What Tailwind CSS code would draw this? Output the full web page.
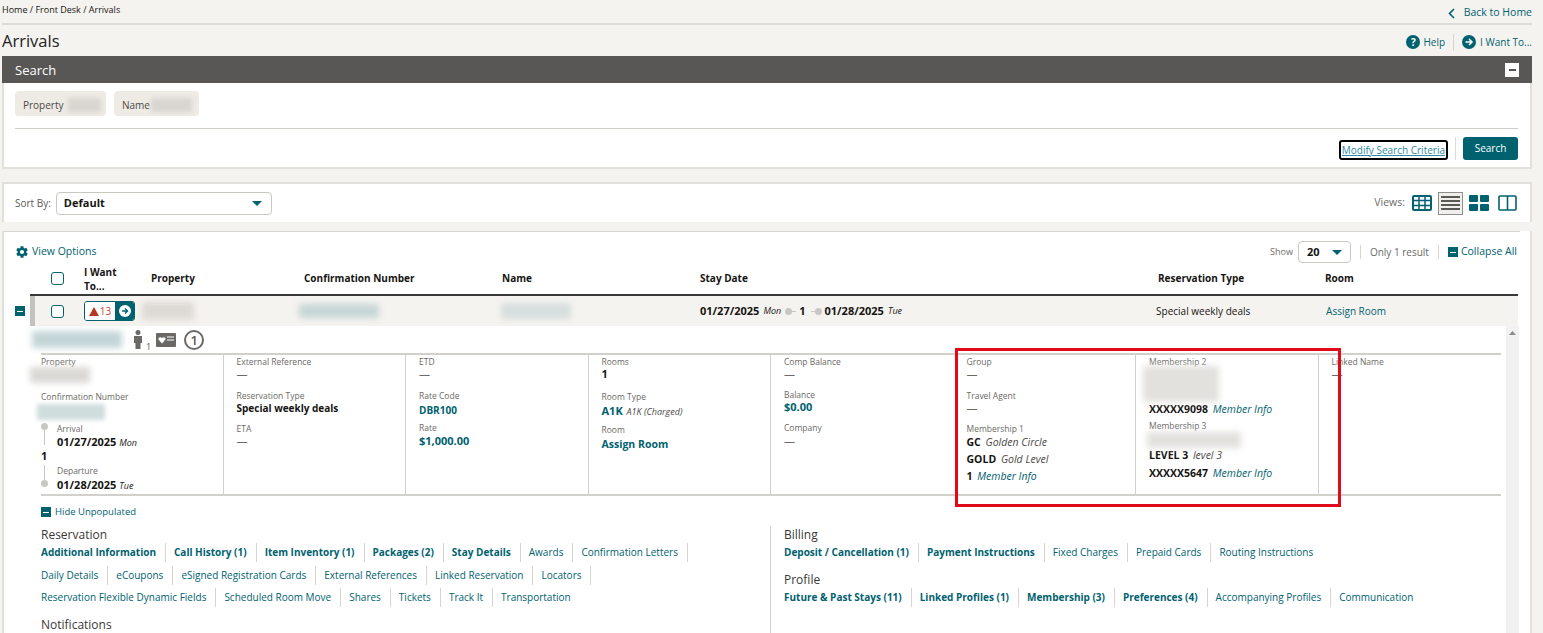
<!DOCTYPE html>
<html lang="en">
  <head>
    <meta charset="UTF-8" />
    <title>Arrivals</title>
    <script src="https://cdn.jsdelivr.net/npm/@tailwindcss/browser@4"></script>
  </head>
  <body class="bg-[#f5f3ef] font-['Open_Sans',sans-serif] text-[#161513] h-[633px] overflow-hidden">
    <div class="relative w-[1543px] h-[633px] overflow-hidden">
      <!-- Top bar -->
      <div class="ml-[2px] w-[1530px] h-[25px] flex justify-between border-b-2 border-[#dddbd7]">
        <div class="text-[9px] leading-[12px] pt-[4px]">Home / Front Desk / Arrivals</div>
        <div class="flex items-center gap-[9px] text-[10.5px] text-[#00626f] pt-[3px]">
          <svg width="7" height="11" viewBox="0 0 7 11" fill="none" stroke="#00626f" stroke-width="1.6"><path d="M6 1 1.5 5.5 6 10" /></svg>
          <span>Back to Home</span>
        </div>
      </div>
      <div class="ml-[2px] w-[1530px] h-[31px] flex justify-between items-center">
        <h1 class="text-[16.5px] leading-[24px] pt-[1px] text-[#201f1d]">Arrivals</h1>
        <div class="flex items-center text-[10px] text-[#00626f] pt-[3px]">
          <span class="w-[14px] h-[14px] rounded-full bg-[#00626f] text-white text-[10px] leading-[14px] font-bold text-center mr-[3px]">?</span>
          <span>Help</span>
          <span class="w-px h-[17px] bg-[#d6d4cf] mx-[8px]"></span>
          <svg class="mr-[4px]" width="14" height="14" viewBox="0 0 14 14"><circle cx="7" cy="7" r="7" fill="#00626f" /><path d="M3.5 7h6M7 4l3 3-3 3" fill="none" stroke="#fff" stroke-width="1.6" /></svg>
          <span>I Want To...</span>
        </div>
      </div>

      <!-- Search panel -->
      <section class="ml-[2px] w-[1530px] h-[113px] bg-white border-2 border-t-0 border-[#e2e0db]">
        <div class="h-[27px] -ml-[2px] -mr-[2px] bg-[#585755] flex items-center justify-between pl-[13px] pr-[13px]">
          <span class="text-[13px] text-white pt-[3px]">Search</span>
          <span class="w-[14px] h-[14px] bg-white flex items-center justify-center"><span class="w-[7px] h-[2px] bg-[#585755]"></span></span>
        </div>
        <div class="flex gap-[8px] ml-[11px] mt-[8px]">
          <div class="w-[91px] h-[25px] bg-[#eeebe4] rounded-[4px] flex items-center pl-[8px] pt-[3px] text-[10px] text-[#4b4a47]">
            Property
            <span class="ml-[4px] w-[33px] h-[14px] bg-[#d8d6d1] blur-[2px]"></span>
          </div>
          <div class="w-[85px] h-[25px] bg-[#eeebe4] rounded-[4px] flex items-center pl-[8px] pt-[3px] text-[10px] text-[#4b4a47]">
            Name
            <span class="ml-[1px] w-[41px] h-[14px] bg-[#d8d6d1] blur-[2px]"></span>
          </div>
        </div>
        <div class="ml-[11px] mr-[12px] mt-[12px] border-t border-[#cfcdc8]"></div>
        <div class="flex justify-end items-center mr-[12px] mt-[8px]">
          <a class="h-[20px] mt-[2px] px-[1px] border-2 border-black rounded-[3px] text-[10px] leading-[17px] text-[#2f8aa3] underline">Modify Search Criteria</a>
          <span class="w-px h-[23px] bg-[#dddbd7] mx-[7px]"></span>
          <button class="w-[55px] h-[23px] bg-[#00626f] rounded-[3px] text-white text-[10px]">Search</button>
        </div>
      </section>

      <!-- Sort bar -->
      <section class="ml-[2px] mt-[13px] w-[1530px] h-[40px] bg-white border-2 border-b-0 border-[#e2e0db] flex items-center justify-between pl-[11px] pr-[13px]">
        <div class="flex items-center gap-[5px]">
          <span class="text-[10px] text-[#5c5b58]">Sort By:</span>
          <div class="w-[216px] h-[23px] border border-[#c9c7c2] rounded-[4px] flex items-center justify-between pl-[7px] pr-[9px] text-[11px] font-bold">
            Default
            <svg width="10" height="5" viewBox="0 0 10 5"><path d="M0 0h10L5 5z" fill="#00626f" /></svg>
          </div>
        </div>
        <div class="flex items-center">
          <span class="text-[10.5px] text-[#6b6a66] mr-[7px]">Views:</span>
          <svg class="mr-[6px]" width="20" height="16" viewBox="0 0 20 16"><rect x="1" y="1" width="18" height="14" rx="1" fill="none" stroke="#00626f" stroke-width="2" /><path d="M1 5.5h18M1 10.5h18M7 1v14M13 1v14" stroke="#00626f" stroke-width="1.5" /></svg>
          <div class="w-[25px] h-[23px] bg-[#f1efeb] border border-[#8f8e8a] flex flex-col justify-center gap-[2px] px-[2px] mr-[6px]">
            <span class="h-[2px] bg-[#5a5956]"></span><span class="h-[2px] bg-[#5a5956]"></span><span class="h-[2px] bg-[#5a5956]"></span><span class="h-[2px] bg-[#5a5956]"></span>
          </div>
          <svg class="mr-[9px]" width="20" height="16" viewBox="0 0 20 16" fill="#00626f"><rect width="9" height="7" rx="1" /><rect x="11" width="9" height="7" rx="1" /><rect y="9" width="9" height="7" rx="1" /><rect x="11" y="9" width="9" height="7" rx="1" /></svg>
          <svg width="19" height="16" viewBox="0 0 19 16" fill="none" stroke="#00626f" stroke-width="1.6"><rect x="1" y="1" width="17" height="14" rx="1" /><path d="M9.5 1v14" /></svg>
        </div>
      </section>

      <!-- Results panel -->
      <section class="ml-[2px] mt-[9px] w-[1530px] h-[403px] bg-white border-x-2 border-[#e2e0db]">
        <div class="h-px bg-[#d9d7d2] w-[1516px]"></div>
        <div class="h-[34px] flex items-start justify-between pt-[9px] pl-[11px] pr-[13px]">
          <div class="h-[22px] flex items-center gap-[3px] text-[10.5px] text-[#00626f]">
            <svg width="14" height="14" viewBox="0 0 24 24" fill="#00626f"><path d="M19.4 13a7.8 7.8 0 0 0 0-2l2.4-1.9-2.4-4.2-2.9 1.2a8 8 0 0 0-1.700-1L14.400 2H9.600l-.4 3.100a8 8 0 0 0-1.700 1L4.600 4.900 2.200 9.100 4.600 11a7.800 7.800 0 0 0 0 2l-2.400 1.900 2.400 4.200 2.900-1.200a8 8 0 0 0 1.700 1l.4 3.100h4.800l.4-3.100a8 8 0 0 0 1.700-1l2.900 1.200 2.400-4.200zM12 15.500a3.500 3.500 0 1 1 0-7 3.500 3.500 0 0 1 0 7z" /></svg>
            View Options
          </div>
          <div class="h-[22px] flex items-center text-[10px]">
            <span class="text-[9px] text-[#6b6a66] mr-[5px]">Show</span>
            <div class="w-[53px] h-[22px] border border-[#c9c7c2] rounded-[4px] flex items-center justify-between pl-[8px] pr-[8px] text-[11px] font-bold">
              20
              <svg width="10" height="5" viewBox="0 0 10 5"><path d="M0 0h10L5 5z" fill="#00626f" /></svg>
            </div>
            <span class="w-px h-[14px] bg-[#d6d4cf] ml-[9px] mr-[9px]"></span>
            <span class="text-[#6b6a66]">Only 1 result</span>
            <span class="w-px h-[14px] bg-[#d6d4cf] ml-[9px] mr-[9px]"></span>
            <span class="w-[10px] h-[10px] bg-[#00626f] flex items-center justify-center mr-[3px]"><span class="w-[6px] h-px bg-white"></span></span>
            <span class="text-[10.5px] text-[#00626f]">Collapse All</span>
          </div>
        </div>

        <!-- Table head -->
        <div class="ml-[26px] w-[1488px] h-[30px] border-b-2 border-[#3a3937] pb-[3px] flex items-center text-[10px] font-bold">
          <span class="ml-[21px] w-[13px] h-[13px] border border-[#00626f] rounded-[3px]"></span>
          <span class="ml-[20px] w-[50px] leading-[14px]">I Want To...</span>
          <span class="ml-[17px] w-[153px]">Property</span>
          <span class="w-[198px]">Confirmation Number</span>
          <span class="w-[198px]">Name</span>
          <span class="w-[458px]">Stay Date</span>
          <span class="w-[167px]">Reservation Type</span>
          <span>Room</span>
        </div>

        <!-- Reservation row -->
        <div class="flex h-[30px]">
          <div class="w-[26px] flex items-center pl-[11px]">
            <span class="w-[10px] h-[10px] bg-[#00626f] flex items-center justify-center"><span class="w-[6px] h-px bg-white"></span></span>
          </div>
          <div class="w-[1488px] bg-[#f5f3ef] border-l-[5px] border-[#c4c2bd] flex items-center text-[11px]">
            <span class="ml-[16px] w-[13px] h-[13px] bg-white border border-[#00626f] rounded-[3px]"></span>
            <div class="ml-[20px] w-[51px] h-[20px] rounded-[3px] border border-[#00626f] flex overflow-hidden">
              <span class="w-[30px] bg-white flex items-center justify-center gap-[1px] text-[10px] text-[#c74634]">
                <svg width="10" height="9" viewBox="0 0 10 9"><path d="M5 0l5 9H0z" fill="#b5391f" /></svg>13
              </span>
              <span class="flex-1 bg-[#00626f] flex items-center justify-center">
                <svg width="12" height="12" viewBox="0 0 14 14"><circle cx="7" cy="7" r="7" fill="#fff" /><path d="M3.500 7h6M7 4l3 3-3 3" fill="none" stroke="#00626f" stroke-width="1.6" /></svg>
              </span>
            </div>
            <span class="ml-[7px] w-[52px] h-[18px] bg-[#dcdad5] blur-[3px]"></span>
            <span class="ml-[105px] w-[80px] h-[14px] bg-[#c6d6d6] blur-[3px]"></span>
            <span class="ml-[122px] w-[70px] h-[16px] bg-[#d6dfde] blur-[3px]"></span>
            <span class="ml-[129px] font-bold">01/27/2025</span>
            <span class="ml-[4px] text-[9px] italic">Mon</span>
            <span class="ml-[4px] w-[7px] h-[7px] rounded-full bg-[#c9c7c2]"></span>
            <span class="w-[4px] h-px bg-[#c9c7c2]"></span>
            <span class="ml-[3px] font-bold">1</span>
            <span class="ml-[5px] w-[4px] h-px bg-[#c9c7c2]"></span>
            <span class="w-[7px] h-[7px] rounded-full bg-[#c9c7c2]"></span>
            <span class="ml-[3px] font-bold">01/28/2025</span>
            <span class="ml-[4px] text-[9px] italic">Tue</span>
            <span class="ml-[254px] w-[170px] text-[10px]">Special weekly deals</span>
            <span class="text-[10px] text-[#00626f]">Assign Room</span>
          </div>
        </div>

        <!-- Details, with scrollbar on the right -->
        <div class="flex">
          <div class="w-[1502px]">
            <div class="ml-[28px] h-[27px] flex items-center">
              <span class="w-[90px] h-[17px] bg-[#c4d5d8] blur-[3px]"></span>
              <svg class="ml-[11px]" width="14" height="19" viewBox="0 0 14 19" fill="#6a6966"><circle cx="5" cy="2.500" r="2.500" /><path d="M1 6h8v7H7.500v6h-5v-6H1z" /></svg>
              <span class="text-[9px] text-[#5c5b58] self-end -ml-[1px]">1</span>
              <svg class="ml-[5px]" width="20" height="14" viewBox="0 0 20 14"><rect width="20" height="14" rx="1" fill="#6a6966" /><path d="M6 10.500 2.500 6.500C2 4.500 4.500 3.500 6 5c1.500-1.500 4-.5 3.500 1.500z" fill="#fff" /><path d="M11 4h7M11 7h7" stroke="#fff" /></svg>
              <span class="ml-[8px] w-[20px] h-[20px] rounded-full border-2 border-[#6a6966] text-[13px] leading-[16px] text-center font-semibold text-[#5c5b58]">1</span>
            </div>

            <!-- Eight column block -->
            <div class="ml-[37px] w-[1460px] h-[143px] border-y-2 border-[#d2d0cb] grid grid-cols-8 text-[8.5px] leading-[12px] text-[#6b6a66]">
              <div class="pt-[1px] border-r border-[#d2d0cb]">
                <div>Property</div>
                <div class="-ml-[11px] mt-[-1px] w-[60px] h-[16px] bg-[#dbd9d5] blur-[3px]"></div>
                <div class="mt-[8px]">Confirmation Number</div>
                <div class="-ml-[4px] mt-[1px] w-[68px] h-[16px] bg-[#cfdddc] blur-[2px]"></div>
                <div class="mt-[3px] flex">
                  <svg class="mr-[9px]" width="7" height="28" viewBox="0 0 7 28"><circle cx="3.500" cy="3.500" r="3.500" fill="#c9c7c2" /><path d="M3.500 7v15" stroke="#c9c7c2" /></svg>
                  <div>
                    <div>Arrival</div>
                    <div class="mt-[1px] text-[11px] text-[#161513] font-bold">01/27/2025 <span class="font-normal italic text-[9px]">Mon</span></div>
                  </div>
                </div>
                <div class="mt-[-1px] text-[11px] font-bold text-[#161513]">1</div>
                <div class="mt-[3px] flex">
                  <svg class="mr-[9px]" width="7" height="28" viewBox="0 0 7 28"><path d="M3.500 0v15" stroke="#c9c7c2" /><circle cx="3.500" cy="18.500" r="3.500" fill="#c9c7c2" /></svg>
                  <div>
                    <div>Departure</div>
                    <div class="mt-[2px] text-[11px] text-[#161513] font-bold">01/28/2025 <span class="font-normal italic text-[9px]">Tue</span></div>
                  </div>
                </div>
              </div>
              <div class="pt-[1px] pl-[13px] border-r border-[#d2d0cb]">
                <div>External Reference</div>
                <div class="text-[11px] text-[#6b6a66]">—</div>
                <div class="mt-[10px]">Reservation Type</div>
                <div class="text-[10px] font-bold text-[#161513]">Special weekly deals</div>
                <div class="mt-[9px]">ETA</div>
                <div class="text-[11px]">—</div>
              </div>
              <div class="pt-[1px] pl-[13px] border-r border-[#d2d0cb]">
                <div>ETD</div>
                <div class="text-[11px]">—</div>
                <div class="mt-[10px]">Rate Code</div>
                <div class="mt-[2px] text-[10px] font-bold text-[#00626f]">DBR100</div>
                <div class="mt-[6px]">Rate</div>
                <div class="mt-[1px] text-[11px] font-bold text-[#00626f]">$1,000.00</div>
              </div>
              <div class="pt-[1px] pl-[13px] border-r border-[#d2d0cb]">
                <div>Rooms</div>
                <div class="text-[11px] font-bold text-[#161513]">1</div>
                <div class="mt-[11px]">Room Type</div>
                <div class="mt-[2px] text-[11px] font-bold text-[#00626f]">A1K <span class="ml-[1px] font-normal italic text-[9px] text-[#4b4a47]">A1K (Charged)</span></div>
                <div class="mt-[6px]">Room</div>
                <div class="mt-[2px] text-[10.5px] font-bold text-[#00626f]">Assign Room</div>
              </div>
              <div class="pt-[1px] pl-[13px]">
                <div>Comp Balance</div>
                <div class="text-[11px]">—</div>
                <div class="mt-[9px]">Balance</div>
                <div class="text-[11px] font-bold text-[#00626f]">$0.00</div>
                <div class="mt-[9px]">Company</div>
                <div class="mt-[1px] text-[11px]">—</div>
              </div>
              <div class="pt-[1px] pl-[13px] border-r border-[#d2d0cb]">
                <div>Group</div>
                <div class="text-[11px]">—</div>
                <div class="mt-[10px]">Travel Agent</div>
                <div class="text-[11px]">—</div>
                <div class="mt-[9px]">Membership 1</div>
                <div class="mt-[1px] text-[10.5px] font-bold text-[#161513]">GC <span class="ml-[2px] font-normal italic text-[10.5px] text-[#4b4a47]">Golden Circle</span></div>
                <div class="mt-[5px] text-[10.5px] font-bold text-[#161513]">GOLD <span class="ml-[2px] font-normal italic text-[10.5px] text-[#4b4a47]">Gold Level</span></div>
                <div class="mt-[5px] text-[10.5px] font-bold text-[#161513]">1 <span class="ml-[2px] font-normal italic text-[10.5px] text-[#00626f]">Member Info</span></div>
              </div>
              <div class="pt-[1px] pl-[13px] border-r border-[#d2d0cb]">
                <div>Membership 2</div>
                <div class="-ml-[6px] -mt-[2px] w-[76px] h-[36px] bg-[#e2e1de] blur-[3px]"></div>
                <div class="mt-[1px] text-[10.5px] font-bold text-[#161513]">XXXXX9098 <span class="ml-[2px] font-normal italic text-[10.5px] text-[#00626f]">Member Info</span></div>
                <div class="mt-[5px]">Membership 3</div>
                <div class="-ml-[2px] w-[94px] h-[16px] bg-[#e2e1de] blur-[3px]"></div>
                <div class="mt-[1px] text-[10.5px] font-bold text-[#161513]">LEVEL 3 <span class="ml-[2px] font-normal italic text-[10.5px] text-[#4b4a47]">level 3</span></div>
                <div class="mt-[6px] text-[10.5px] font-bold text-[#161513]">XXXXX5647 <span class="ml-[2px] font-normal italic text-[10.5px] text-[#00626f]">Member Info</span></div>
              </div>
              <div class="pt-[1px] pl-[13px]">
                <div>Linked Name</div>
                <div class="text-[11px]">—</div>
              </div>
            </div>

            <div class="ml-[37px] mt-[9px] flex items-center gap-[4px] text-[9.5px] text-[#00626f]">
              <span class="w-[10px] h-[10px] bg-[#00626f] flex items-center justify-center"><span class="w-[6px] h-px bg-white"></span></span>
              Hide Unpopulated
            </div>

            <!-- Link groups -->
            <div class="ml-[37px] mt-[7px] grid grid-cols-2 w-[1460px] text-[10px] text-[#00626f]">
              <div>
                <h3 class="text-[12px] leading-[16px] text-[#3a3937] pt-[1px]">Reservation</h3>
                <div class="flex h-[19px] items-stretch leading-[19px]">
                  <a class="font-bold pr-[9px] mr-[8px] border-r border-[#d6d4cf]">Additional Information</a>
                  <a class="font-bold pr-[9px] mr-[8px] border-r border-[#d6d4cf]">Call History (1)</a>
                  <a class="font-bold pr-[9px] mr-[8px] border-r border-[#d6d4cf]">Item Inventory (1)</a>
                  <a class="font-bold pr-[9px] mr-[8px] border-r border-[#d6d4cf]">Packages (2)</a>
                  <a class="font-bold pr-[9px] mr-[8px] border-r border-[#d6d4cf]">Stay Details</a>
                  <a class="pr-[9px] mr-[8px] border-r border-[#d6d4cf]">Awards</a>
                  <a class="pr-[9px] border-r border-[#d6d4cf]">Confirmation Letters</a>
                </div>
                <div class="flex h-[19px] items-stretch mt-[4px] leading-[19px]">
                  <a class="pr-[9px] mr-[8px] border-r border-[#d6d4cf]">Daily Details</a>
                  <a class="pr-[9px] mr-[8px] border-r border-[#d6d4cf]">eCoupons</a>
                  <a class="pr-[9px] mr-[8px] border-r border-[#d6d4cf]">eSigned Registration Cards</a>
                  <a class="pr-[9px] mr-[8px] border-r border-[#d6d4cf]">External References</a>
                  <a class="pr-[9px] mr-[8px] border-r border-[#d6d4cf]">Linked Reservation</a>
                  <a class="pr-[9px] border-r border-[#d6d4cf]">Locators</a>
                </div>
                <div class="flex h-[19px] items-stretch mt-[3px] leading-[19px]">
                  <a class="pr-[9px] mr-[8px] border-r border-[#d6d4cf]">Reservation Flexible Dynamic Fields</a>
                  <a class="pr-[9px] mr-[8px] border-r border-[#d6d4cf]">Scheduled Room Move</a>
                  <a class="pr-[9px] mr-[8px] border-r border-[#d6d4cf]">Shares</a>
                  <a class="pr-[9px] mr-[8px] border-r border-[#d6d4cf]">Tickets</a>
                  <a class="pr-[9px] mr-[8px] border-r border-[#d6d4cf]">Track It</a>
                  <a>Transportation</a>
                </div>
                <h3 class="mt-[10px] text-[12px] leading-[16px] text-[#3a3937]">Notifications</h3>
                <!-- only the tops of this row's separators are in view -->
                <div class="flex h-[19px]">
                  <span class="w-[71px] border-r border-[#d6d4cf]"></span>
                  <span class="w-[45px] border-r border-[#d6d4cf]"></span>
                  <span class="w-[78px] border-r border-[#d6d4cf]"></span>
                  <span class="w-[94px] border-r border-[#d6d4cf]"></span>
                  <span class="w-[87px] border-r border-[#d6d4cf]"></span>
                  <span class="w-[45px] border-r border-[#d6d4cf]"></span>
                </div>
              </div>
              <div class="border-l border-[#d2d0cb] pl-[13px] -ml-[1px] h-[120px]">
                <h3 class="text-[12px] leading-[16px] text-[#3a3937] pt-[1px]">Billing</h3>
                <div class="flex h-[19px] items-stretch leading-[19px]">
                  <a class="font-bold pr-[9px] mr-[8px] border-r border-[#d6d4cf]">Deposit / Cancellation (1)</a>
                  <a class="font-bold pr-[9px] mr-[8px] border-r border-[#d6d4cf]">Payment Instructions</a>
                  <a class="pr-[9px] mr-[8px] border-r border-[#d6d4cf]">Fixed Charges</a>
                  <a class="pr-[9px] mr-[8px] border-r border-[#d6d4cf]">Prepaid Cards</a>
                  <a>Routing Instructions</a>
                </div>
                <h3 class="mt-[10px] text-[12px] leading-[16px] text-[#3a3937]">Profile</h3>
                <div class="flex h-[19px] items-stretch leading-[19px]">
                  <a class="font-bold pr-[9px] mr-[8px] border-r border-[#d6d4cf]">Future &amp; Past Stays (11)</a>
                  <a class="font-bold pr-[9px] mr-[8px] border-r border-[#d6d4cf]">Linked Profiles (1)</a>
                  <a class="font-bold pr-[9px] mr-[8px] border-r border-[#d6d4cf]">Membership (3)</a>
                  <a class="font-bold pr-[9px] mr-[8px] border-r border-[#d6d4cf]">Preferences (4)</a>
                  <a class="pr-[9px] mr-[8px] border-r border-[#d6d4cf]">Accompanying Profiles</a>
                  <a>Communication</a>
                </div>
              </div>
            </div>
          </div>
          <div class="w-[13px] h-[320px] bg-[#f1f1f1] flex justify-center pt-[5px]">
            <svg width="7" height="4" viewBox="0 0 7 4"><path d="M0 4 3.500 0 7 4z" fill="#8a8a8a" /></svg>
          </div>
        </div>
      </section>

      <!-- Red annotation box drawn over the screenshot -->
      <div class="absolute left-[955px] top-[348px] w-[386px] h-[159px] border-[3px] border-[#e00a1b]"></div>
    </div>
  </body>
</html>
